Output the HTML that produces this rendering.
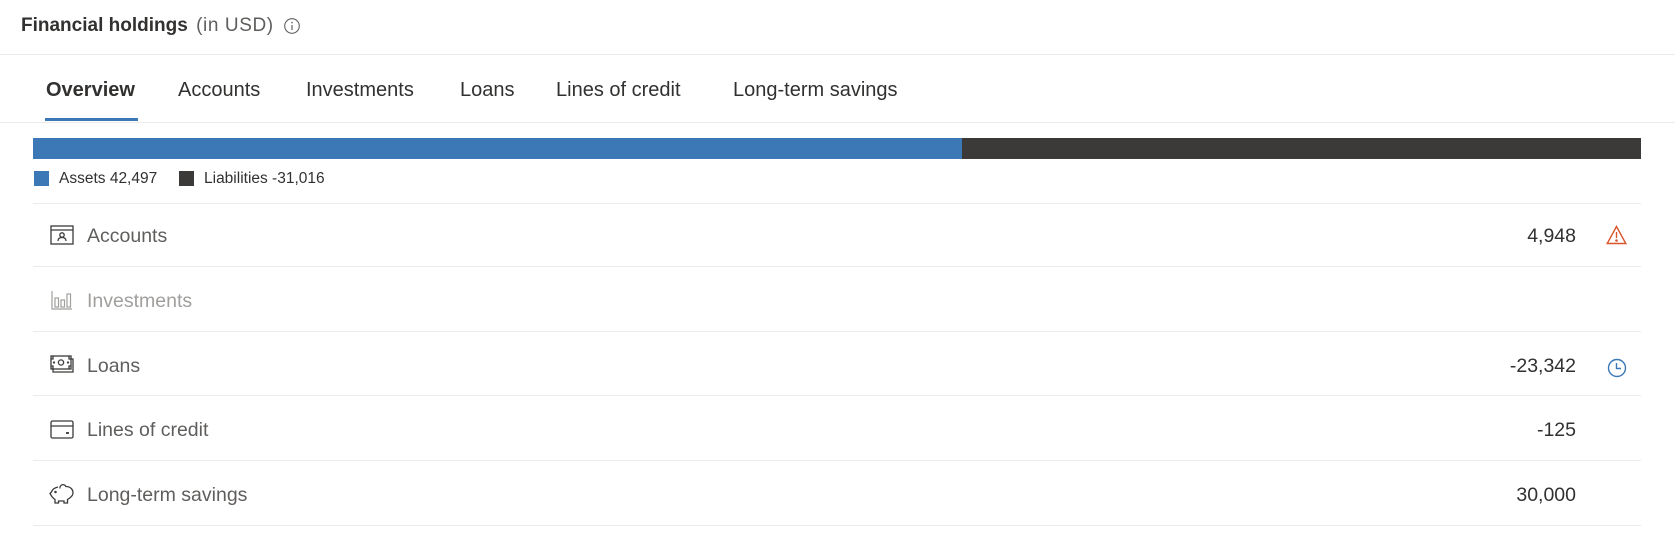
<!DOCTYPE html>
<html><head><meta charset="utf-8"><style>
*{margin:0;padding:0;box-sizing:border-box}
body{width:1675px;height:559px;background:#fff;font-family:"Segoe UI","Liberation Sans",sans-serif;position:relative;overflow:hidden;color:#323130}
.a{position:absolute;white-space:nowrap}
.hl{position:absolute;height:1px;background:#edebe9}
.tab{position:absolute;top:77px;font-size:20px;color:#323130;line-height:26px}
.rt{position:absolute;left:87px;font-size:19.5px;color:#605e5c;line-height:26px}
.num{position:absolute;right:99px;font-size:19.5px;color:#323130;line-height:26px;text-align:right}
svg{position:absolute}
</style></head><body>
<div class="a" style="left:21px;top:13px;font-size:19px;font-weight:600;color:#323130;line-height:26px">Financial holdings <span style="font-weight:400;color:#605e5c;margin-left:3px;letter-spacing:0.6px">(in USD)</span></div>
<svg style="left:283px;top:17px" width="18" height="18" viewBox="0 0 18 18"><circle cx="9" cy="9" r="7.3" fill="none" stroke="#605e5c" stroke-width="1.1"/><line x1="9" y1="8" x2="9" y2="13" stroke="#605e5c" stroke-width="1.2"/><circle cx="9" cy="5.6" r="0.8" fill="#605e5c"/></svg>
<div class="hl" style="left:0;right:0;top:54px"></div>

<div class="tab" style="left:46px;font-weight:600">Overview</div>
<div class="tab" style="left:178px">Accounts</div>
<div class="tab" style="left:306px">Investments</div>
<div class="tab" style="left:460px">Loans</div>
<div class="tab" style="left:556px">Lines of credit</div>
<div class="tab" style="left:733px">Long-term savings</div>
<div style="position:absolute;left:45px;top:118px;width:93px;height:3px;background:#3b78b5"></div>
<div class="hl" style="left:0;right:0;top:122px"></div>

<div style="position:absolute;left:33px;top:138px;width:929px;height:21px;background:#3b78b5"></div>
<div style="position:absolute;left:962px;top:138px;width:679px;height:21px;background:#3b3a39"></div>

<div style="position:absolute;left:34px;top:171px;width:15px;height:15px;background:#3b78b5"></div>
<div class="a" style="left:59px;top:168px;font-size:15.5px;color:#323130;line-height:21px">Assets 42,497</div>
<div style="position:absolute;left:179px;top:171px;width:15px;height:15px;background:#3b3a39"></div>
<div class="a" style="left:204px;top:168px;font-size:15.5px;color:#323130;line-height:21px">Liabilities -31,016</div>

<div class="hl" style="left:33px;width:1608px;top:203px"></div>
<div class="hl" style="left:33px;width:1608px;top:266px"></div>
<div class="hl" style="left:33px;width:1608px;top:331px"></div>
<div class="hl" style="left:33px;width:1608px;top:395px"></div>
<div class="hl" style="left:33px;width:1608px;top:460px"></div>
<div class="hl" style="left:33px;width:1608px;top:525px"></div>

<svg style="left:50px;top:225px" width="24" height="20" viewBox="0 0 24 20" fill="none" stroke="#3b3a39" stroke-width="1.3"><rect x="1" y="1" width="22" height="18"/><line x1="1" y1="5" x2="23" y2="5"/><circle cx="12" cy="10" r="2.2"/><path d="M8 16c0-2.5 1.8-3.5 4-3.5s4 1 4 3.5"/></svg>
<div class="rt" style="top:223px">Accounts</div>
<div class="num" style="top:223px">4,948</div>
<svg style="left:1606px;top:225px" width="21" height="20" viewBox="0 0 21 20" fill="none" stroke="#d9542b" stroke-width="1.4"><path d="M10.5 1.5L19.8 18.5H1.2Z"/><line x1="10.5" y1="7" x2="10.5" y2="13"/><circle cx="10.5" cy="15.5" r="0.6" fill="#d9542b"/></svg>

<svg style="left:51px;top:290px" width="22" height="20" viewBox="0 0 22 20" fill="none" stroke="#a19f9d" stroke-width="1.2"><path d="M1 1V19H21"/><rect x="4" y="8" width="3.5" height="9"/><rect x="10" y="10" width="3.5" height="7"/><rect x="16" y="4" width="3.5" height="13"/></svg>
<div class="rt" style="top:288px;color:#a19f9d">Investments</div>

<svg style="left:50px;top:355px" width="24" height="19" viewBox="0 0 24 19" fill="none" stroke="#3b3a39" stroke-width="1.3"><rect x="1" y="1" width="20" height="13"/><path d="M3 14v3h20V4h-2"/><circle cx="11" cy="7.5" r="2.6"/><circle cx="4" cy="7.5" r="0.5"/><circle cx="18" cy="7.5" r="0.5"/><path d="M1 4h2V1M19 1v3h2M1 11h2v3M19 14v-3h2"/></svg>
<div class="rt" style="top:353px">Loans</div>
<div class="num" style="top:353px">-23,342</div>
<svg style="left:1607px;top:358px" width="20" height="20" viewBox="0 0 20 20" fill="none" stroke="#3b78b5" stroke-width="1.4"><circle cx="10" cy="10" r="8.5"/><path d="M9.5 5v5.5H14"/></svg>

<svg style="left:50px;top:420px" width="24" height="19" viewBox="0 0 24 19" fill="none" stroke="#3b3a39" stroke-width="1.3"><rect x="1" y="1" width="22" height="17" rx="1.5"/><line x1="1" y1="6" x2="23" y2="6"/><line x1="16" y1="13" x2="19" y2="13" stroke-width="1.8"/></svg>
<div class="rt" style="top:417px">Lines of credit</div>
<div class="num" style="top:417px">-125</div>

<svg style="left:49px;top:482px" width="26" height="22" viewBox="0 0 26 22" fill="none" stroke="#3b3a39" stroke-width="1.3"><path d="M9 5C5 6 3 8 2.5 10L1 11.5 2.5 14C4 16 5 17 6 17.5V21H9.5V19H15V21H18.5V17.5C21 16 24 14 24 11 24 7 21 4.5 17 4.5"/><path d="M11 6.5A3 3 0 1 1 17 5"/><circle cx="6.5" cy="10" r="0.6" fill="#3b3a39"/></svg>
<div class="rt" style="top:482px">Long-term savings</div>
<div class="num" style="top:482px">30,000</div>
</body></html>
